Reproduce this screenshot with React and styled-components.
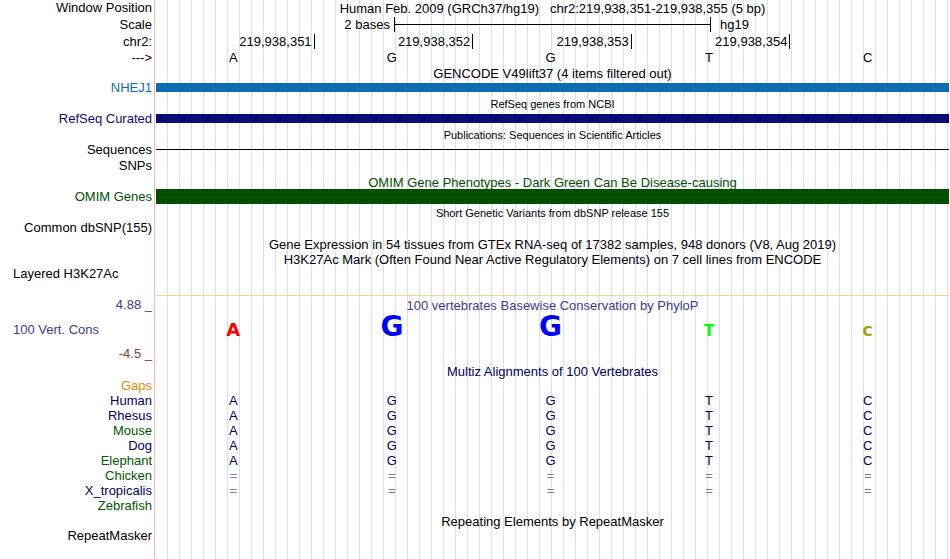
import React from "react";
import styled, { createGlobalStyle } from "styled-components";

const BASES = ["A", "G", "G", "T", "C"];
const POSITIONS = ["219,938,351", "219,938,352", "219,938,353", "219,938,354"];

// font size follows the phyloP score of each base
const LOGO = [
    { base: "A", size: 18, color: "#ff0000" },
    { base: "G", size: 28, color: "#0000ff" },
    { base: "G", size: 28, color: "#0000ff" },
    { base: "T", size: 15, color: "#00ff00" },
    { base: "C", size: 14, color: "#a0a000" },
];

const NAVY = "#000064";
const GREEN = "#005a00";

const SPECIES = [
    { name: "Human", color: NAVY, aligned: true },
    { name: "Rhesus", color: NAVY, aligned: true },
    { name: "Mouse", color: GREEN, aligned: true },
    { name: "Dog", color: NAVY, aligned: true },
    { name: "Elephant", color: GREEN, aligned: true },
    { name: "Chicken", color: GREEN, gap: true },
    { name: "X_tropicalis", color: NAVY, gap: true },
    { name: "Zebrafish", color: GREEN },
];

function Track({ label, color, height = 16, left, top, children }) {
    return (
        <Row $height={height} $top={top}>
            <Label $color={color} $left={left}>{label}</Label>
            <Data>{children}</Data>
        </Row>
    );
}

function BaseRow({ bases, color }) {
    return (
        <Bases>
            {bases.map((base, i) => (
                <Base key={i} $color={color}>{base}</Base>
            ))}
        </Bases>
    );
}

export default function App() {
    return (
        <>
            <GlobalStyle />
            <Browser>
                <Track label="Window Position" height={15}>
                    <Title>Human Feb. 2009 (GRCh37/hg19){"   "}chr2:219,938,351-219,938,355 (5 bp)</Title>
                </Track>
                <Track label="Scale" height={18}>
                    <Scale>
                        <ScaleText $end>2 bases</ScaleText>
                        <ScaleBar />
                        <ScaleText>hg19</ScaleText>
                    </Scale>
                </Track>
                <Track label="chr2:">
                    <Bases>
                        {POSITIONS.map((p) => (
                            <Position key={p}>{p}</Position>
                        ))}
                    </Bases>
                </Track>
                <Track label="--->">
                    <BaseRow bases={BASES} color="#000" />
                </Track>

                <Track height={15}>
                    <Title>GENCODE V49lift37 (4 items filtered out)</Title>
                </Track>
                <Track label="NHEJ1" color="#0c6eaf" height={15}>
                    <Bar $color="#0c6eaf" $thickness={9} />
                </Track>

                <Track>
                    <Title $small>RefSeq genes from NCBI</Title>
                </Track>
                <Track label="RefSeq Curated" color="#0c0c78" height={15}>
                    <Bar $color="#0c0c78" $thickness={9} />
                </Track>

                <Track>
                    <Title $small>Publications: Sequences in Scientific Articles</Title>
                </Track>
                <Track label="Sequences" height={15}>
                    <Bar $color="#000" $thickness={1} />
                </Track>
                <Track label="SNPs" />

                <Track>
                    <Title $color="#005000">OMIM Gene Phenotypes - Dark Green Can Be Disease-causing</Title>
                </Track>
                <Track label="OMIM Genes" color="#005000" height={15}>
                    <Bar $color="#005000" $thickness={15} />
                </Track>

                <Track>
                    <Title $small>Short Genetic Variants from dbSNP release 155</Title>
                </Track>
                <Track label="Common dbSNP(155)" top />

                <Track height={15}>
                    <Title>Gene Expression in 54 tissues from GTEx RNA-seq of 17382 samples, 948 donors (V8, Aug 2019)</Title>
                </Track>
                <Track height={15}>
                    <Title>H3K27Ac Mark (Often Found Near Active Regulatory Elements) on 7 cell lines from ENCODE</Title>
                </Track>
                <Track label="Layered H3K27Ac" left top height={30}>
                    <Baseline />
                </Track>

                <Track label="4.88 _" color="#3c3c8c" height={17}>
                    <Title $color="#3c3c8c">100 vertebrates Basewise Conservation by PhyloP</Title>
                </Track>
                <Track label="100 Vert. Cons" color="#3c3c8c" left height={32}>
                    <Bases>
                        {LOGO.map((l, i) => (
                            <LogoLetter key={i} $color={l.color} $size={l.size}>{l.base}</LogoLetter>
                        ))}
                    </Bases>
                </Track>
                <Track label="-4.5 _" color="#8c3c3c" height={17} />

                <Track>
                    <Title $color={NAVY}>Multiz Alignments of 100 Vertebrates</Title>
                </Track>
                <Track label="Gaps" color="#e68a00" height={15} />
                {SPECIES.map((s) => (
                    <Track key={s.name} label={s.name} color={s.color} height={15}>
                        {s.aligned && <BaseRow bases={BASES} color={NAVY} />}
                        {s.gap && <BaseRow bases={BASES.map(() => "=")} color="#7878b4" />}
                    </Track>
                ))}

                <Track height={15}>
                    <Title>Repeating Elements by RepeatMasker</Title>
                </Track>
                <Track label="RepeatMasker" height={15} />
            </Browser>
        </>
    );
}

const GlobalStyle = createGlobalStyle`
    body {
        margin: 0;
        background: #fff;
        color: #000;
        font-family: "Liberation Sans", Arial, sans-serif;
        font-size: 13px;
    }
`;

/* pink divider after the labels, then a guide line every 12px */
const Browser = styled.main`
    min-height: 100vh;
    padding-right: 1px;
    background-image:
        linear-gradient(#ffb4b4, #ffb4b4),
        repeating-linear-gradient(to right, transparent 0 11px, #dcdcf8 11px 12px);
    background-repeat: no-repeat;
    background-position: 154px 0, right top;
    background-size: 1px 100%, calc(100% - 156px) 100%;
`;

const Row = styled.div`
    display: grid;
    grid-template-columns: 152px minmax(0, 1fr);
    grid-template-rows: 100%;
    column-gap: 4px;
    align-items: ${({ $top }) => ($top ? "start" : "center")};
    height: ${({ $height }) => $height}px;
    line-height: 15px;
    white-space: pre;
`;

const Label = styled.div`
    box-sizing: border-box;
    padding-left: 13px;
    text-align: ${({ $left }) => ($left ? "left" : "right")};
    color: ${({ $color }) => $color || "#000"};
`;

const Data = styled.div`
    display: flex;
    align-items: center;
    height: 100%;
`;

const Title = styled.div`
    flex: 1;
    padding-top: 2px;
    text-align: center;
    font-size: ${({ $small }) => ($small ? 11 : 13)}px;
    color: ${({ $color }) => $color || "#000"};
`;

const Bar = styled.div`
    flex: 1;
    height: ${({ $thickness }) => $thickness}px;
    background: ${({ $color }) => $color};
`;

const Baseline = styled.div`
    flex: 1;
    align-self: flex-end;
    height: 1px;
    background: #ffd28c;
`;

const Scale = styled.div`
    flex: 1;
    display: grid;
    grid-template-columns: 3fr 4fr 3fr;
    align-items: center;
`;

const ScaleText = styled.div`
    padding: ${({ $end }) => ($end ? "0 4px 0 0" : "0 0 0 9px")};
    text-align: ${({ $end }) => ($end ? "right" : "left")};
`;

const ScaleBar = styled.div`
    display: flex;
    align-items: center;
    height: 15px;
    border: solid #000;
    border-width: 0 1px;

    &::before {
        content: "";
        flex: 1;
        height: 1px;
        background: #000;
    }
`;

const Bases = styled.div`
    flex: 1;
    display: grid;
    grid-template-columns: repeat(5, minmax(0, 1fr));
`;

const Base = styled.div`
    padding-right: 4px;
    text-align: center;
    color: ${({ $color }) => $color};
`;

const Position = styled.div`
    padding-right: 2px;
    border-right: 1px solid #000;
    text-align: right;
`;

const LogoLetter = styled(Base)`
    align-self: last baseline;
    font-family: "DejaVu Sans", sans-serif;
    font-weight: bold;
    font-size: ${({ $size }) => $size}px;
    line-height: 28px;
`;
